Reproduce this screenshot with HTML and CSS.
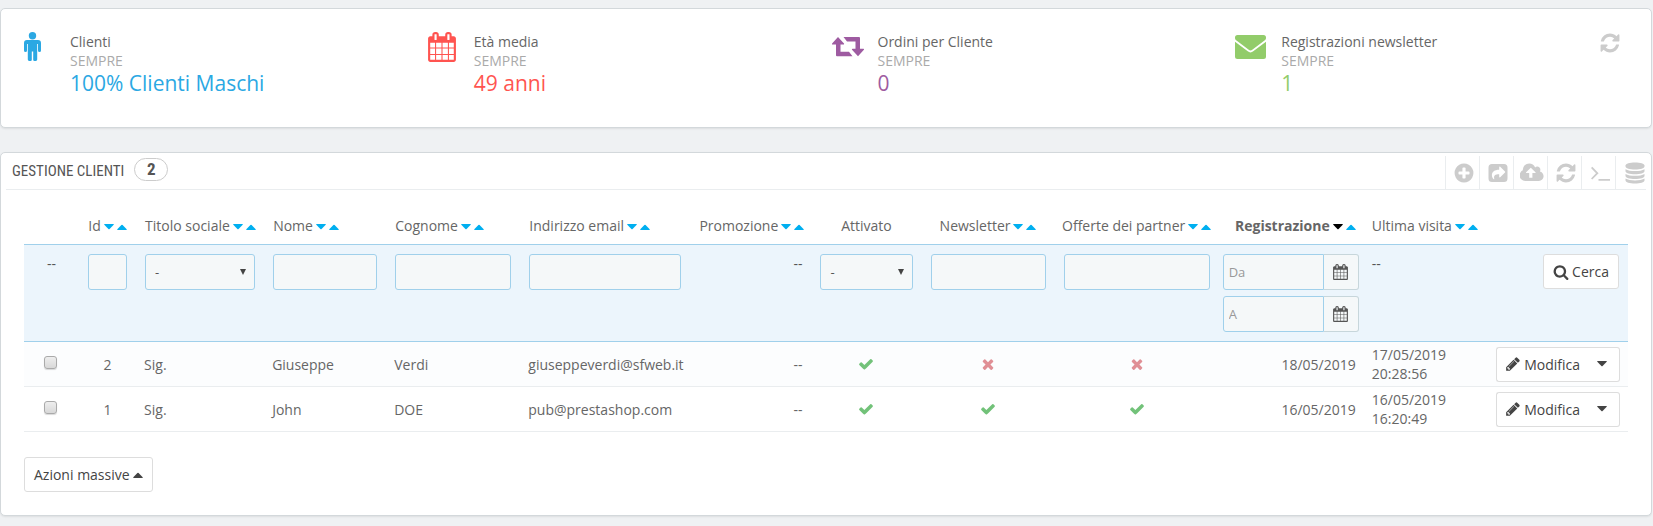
FILE: index.html
```html
<!DOCTYPE html>
<html lang="it">
<head>
    <meta charset="UTF-8">
    <meta name="viewport" content="width=device-width, initial-scale=1.0">
    <title>Gestione Clienti</title>
    <link rel="stylesheet" href="styles.css">
</head>
<body>
    <!-- Icon sprite -->
    <svg class="sprite" aria-hidden="true">
        <symbol id="i-male" viewBox="0 0 17 29">
            <circle cx="8.500" cy="3.700" r="3.700"/>
            <path d="M3 8h11a3 3 0 0 1 3 3v7.400a1.500 1.500 0 0 1-3 0V12h-.8v15.600a1.400 1.400 0 0 1-1.400 1.400H10.400a1.200 1.200 0 0 1-1.200-1.200V19.500H7.800v8.300A1.200 1.200 0 0 1 6.600 29H5.200a1.400 1.400 0 0 1-1.400-1.400V12H3v6.400a1.500 1.500 0 0 1-3 0V11a3 3 0 0 1 3-3z"/>
        </symbol>
        <symbol id="i-calendar" viewBox="64 0 1664 1792">
            <path d="M192 1664h288v-288h-288v288zm352 0h320v-288h-320v288zm-352-352h288v-320h-288v320zm352 0h320v-320h-320v320zm-352-384h288v-288h-288v288zm736 736h320v-288h-320v288zm-384-736h320v-288h-320v288zm768 736h288v-288h-288v288zm-384-352h320v-320h-320v320zm-352-864v-288q0-13-9.500-22.500t-22.500-9.500h-64q-13 0-22.500 9.500t-9.500 22.500v288q0 13 9.500 22.500t22.500 9.500h64q13 0 22.500-9.500t9.500-22.500zm736 864h288v-320h-288v320zm-384-384h320v-288h-320v288zm384 0h288v-288h-288v288zm32-480v-288q0-13-9.500-22.500t-22.500-9.500h-64q-13 0-22.500 9.500t-9.500 22.500v288q0 13 9.500 22.500t22.500 9.500h64q13 0 22.500-9.500t9.500-22.500zm384-64v1280q0 52-38 90t-90 38h-1408q-52 0-90-38t-38-90v-1280q0-52 38-90t90-38h128v-96q0-66 47-113t113-47h64q66 0 113 47t47 113v96h384v-96q0-66 47-113t113-47h64q66 0 113 47t47 113v96h128q52 0 90 38t38 90z"/>
        </symbol>
        <symbol id="i-retweet" viewBox="0 0 32 20">
            <path d="M6 0l6 6.600q.4 1-.6 1H8.500v7.200H17l3.500 4.500H5q-1 0-1-1V7.600H.6q-1 0-.5-1z"/>
            <path d="M26 19.300l-6-6.600q-.4-1 .6-1h2.900V4.500H15L11.500 0H27q1 0 1 1v10.700h3.400q1 0 .5 1z"/>
        </symbol>
        <symbol id="i-envelope" viewBox="0 0 31 24">
            <path d="M2.500 0h26A2.500 2.500 0 0 1 31 2.500v.6c0 1-.6 1.900-1.500 2.500L17.600 14.500c-1.600 1.200-2.600 1.200-4.200 0L1.500 5.600C.6 5 0 4.100 0 3.100v-.6A2.500 2.500 0 0 1 2.500 0z"/>
            <path d="M0 6.800l12.400 9.300c2.400 1.700 3.800 1.700 6.200 0L31 6.800v14.700a2.500 2.500 0 0 1-2.500 2.500h-26A2.500 2.500 0 0 1 0 21.500z"/>
        </symbol>
        <symbol id="i-refresh" viewBox="0 0 1792 1792">
            <path d="M1639 1056q0 5-1 7-64 268-268 434.500t-478 166.500q-146 0-282.500-55t-243.500-157l-129 129q-19 19-45 19t-45-19-19-45v-448q0-26 19-45t45-19h448q26 0 45 19t19 45-19 45l-137 137q71 66 161 102t187 36q134 0 250-65t186-179q11-17 53-117 8-23 30-23h192q13 0 22.500 9.500t9.500 22.500zm25-800v448q0 26-19 45t-45 19h-448q-26 0-45-19t-19-45 19-45l138-138q-148-137-349-137-134 0-250 65t-186 179q-11 17-53 117-8 23-30 23h-199q-13 0-22.500-9.500t-9.500-22.500v-7q65-268 270-434.500t480-166.500q146 0 284 55.500t245 156.500l130-129q19-19 45-19t45 19 19 45z"/>
        </symbol>
        <symbol id="i-plus" viewBox="0 0 1792 1792">
            <path d="M1344 960v-128q0-26-19-45t-45-19h-256v-256q0-26-19-45t-45-19h-128q-26 0-45 19t-19 45v256h-256q-26 0-45 19t-19 45v128q0 26 19 45t45 19h256v256q0 26 19 45t45 19h128q26 0 45-19t19-45v-256h256q26 0 45-19t19-45zm320-64q0 209-103 385.500t-279.500 279.500-385.500 103-385.500-103-279.500-279.500-103-385.500 103-385.500 279.500-279.500 385.500-103 385.500 103 279.500 279.500 103 385.500z"/>
        </symbol>
        <symbol id="i-share" viewBox="0 0 22 22">
            <path fill-rule="evenodd" d="M5 2h12a3.500 3.500 0 0 1 3.500 3.500v11a3.500 3.500 0 0 1-3.500 3.500H5a3.500 3.500 0 0 1-3.500-3.500v-11A3.500 3.500 0 0 1 5 2zm7.200 3.200v2.600C7.500 7.800 4.900 9.900 4.900 13.200c0 1.700.7 3 1.900 4 .3.200.6 0 .5-.3-.9-3.600.8-4.700 4.900-4.700v2.600c0 .6.600.8 1 .4l4.800-4.700c.3-.3.3-.7 0-1l-4.800-4.700c-.4-.4-1-.2-1 .4z"/>
        </symbol>
        <symbol id="i-upload" viewBox="-32 0 1920 1792">
            <path d="M1216 864q0-14-9-23l-352-352q-9-9-23-9t-23 9l-351 351q-10 12-10 24 0 14 9 23t23 9h224v352q0 13 9.500 22.500t22.500 9.500h192q13 0 22.500-9.500t9.500-22.500v-352h224q13 0 22.500-9.500t9.500-22.500zm640 288q0 159-112.500 271.500t-271.500 112.500h-1088q-185 0-316.500-131.500t-131.500-316.500q0-130 70-240t188-165q-2-30-2-43 0-212 150-362t362-150q156 0 285.500 87t188.500 231q71-62 166-62 106 0 181 75t75 181q0 76-41 138 130 31 213.500 135.500t83.500 238.500z"/>
        </symbol>
        <symbol id="i-terminal" viewBox="0 0 22 22">
            <path d="M2 6l1.300-1.200 6.300 6.400-6.300 6.400L2 16.400l5-5.200zM9.500 17H21v1.800H9.500z"/>
        </symbol>
        <symbol id="i-database" viewBox="0 0 20 22">
            <path d="M10 .5c5.300 0 9.500 1.300 9.500 3v1c0 1.700-4.200 3-9.500 3S.5 6.200.5 4.500v-1c0-1.700 4.200-3 9.500-3z"/>
            <path id="disc" d="M.5 7.200C2.500 8.500 6 9.100 10 9.100s7.500-.6 9.500-1.900v2c0 1.700-4.200 3-9.500 3S.5 10.900.5 9.200z"/>
            <use href="#disc" y="4.700"/>
            <use href="#disc" y="9.400"/>
        </symbol>
        <symbol id="i-check" viewBox="0 0 1792 1792">
            <path d="M1671 566q0 40-28 68l-724 724-136 136q-28 28-68 28t-68-28l-136-136-362-362q-28-28-28-68t28-68l136-136q28-28 68-28t68 28l294 295 656-657q28-28 68-28t68 28l136 136q28 28 28 68z"/>
        </symbol>
        <symbol id="i-times" viewBox="0 0 1792 1792">
            <path d="M1490 1322q0 40-28 68l-136 136q-28 28-68 28t-68-28l-294-294-294 294q-28 28-68 28t-68-28l-136-136q-28-28-28-68t28-68l294-294-294-294q-28-28-28-68t28-68l136-136q28-28 68-28t68 28l294 294 294-294q28-28 68-28t68 28l136 136q28 28 28 68t-28 68l-294 294 294 294q28 28 28 68z"/>
        </symbol>
        <symbol id="i-search" viewBox="0 0 1792 1792">
            <path d="M1216 832q0-185-131.500-316.500t-316.500-131.500-316.500 131.500-131.500 316.500 131.500 316.500 316.500 131.500 316.500-131.500 131.500-316.500zm512 832q0 52-38 90t-90 38q-54 0-90-38l-343-342q-179 124-399 124-143 0-273.500-55.500t-225-150-150-225-55.500-273.500 55.500-273.500 150-225 225-150 273.500-55.500 273.500 55.500 225 150 150 225 55.500 273.500q0 220-124 399l343 343q37 37 37 90z"/>
        </symbol>
        <symbol id="i-pencil" viewBox="0 0 1792 1792">
            <path d="M491 1536l91-91-235-235-91 91v107h128v128h107zm523-928q0-22-22-22-10 0-17 7l-542 542q-7 7-7 17 0 22 22 22 10 0 17-7l542-542q7-7 7-17zm-54-192l416 416-832 832h-416v-416zm683 96q0 53-37 90l-166 166-416-416 166-165q36-38 90-38 53 0 91 38l235 234q37 39 37 91z"/>
        </symbol>
        <symbol id="i-down" viewBox="0 0 10 6"><path d="M.7 0h8.600q.9.200.4.800L5.600 5q-.6.500-1.200 0L.3.800Q-.2.200.7 0z"/></symbol>
        <symbol id="i-up" viewBox="0 0 10 6"><path d="M.7 6h8.600q.9-.2.400-.8L5.600 1q-.6-.5-1.200 0L.3 5.200q-.5.600.4.800z"/></symbol>
        <symbol id="i-arrow" viewBox="0 0 6 6"><path d="M0 0h6L3 6z"/></symbol>
    </svg>

    <section class="panel kpi-row">
        <div class="kpi blue">
            <div class="kpi-icon"><svg class="icon-male"><use href="#i-male"/></svg></div>
            <div class="kpi-body">
                <div>Clienti</div>
                <div class="kpi-sub">SEMPRE</div>
                <div class="kpi-value">100% Clienti Maschi</div>
            </div>
        </div>
        <div class="kpi red">
            <div class="kpi-icon"><svg class="icon-calendar"><use href="#i-calendar"/></svg></div>
            <div class="kpi-body">
                <div>Età media</div>
                <div class="kpi-sub">SEMPRE</div>
                <div class="kpi-value">49 anni</div>
            </div>
        </div>
        <div class="kpi purple">
            <div class="kpi-icon"><svg class="icon-retweet"><use href="#i-retweet"/></svg></div>
            <div class="kpi-body">
                <div>Ordini per Cliente</div>
                <div class="kpi-sub">SEMPRE</div>
                <div class="kpi-value">0</div>
            </div>
        </div>
        <div class="kpi green">
            <div class="kpi-icon"><svg class="icon-envelope"><use href="#i-envelope"/></svg></div>
            <div class="kpi-body">
                <div>Registrazioni newsletter</div>
                <div class="kpi-sub">SEMPRE</div>
                <div class="kpi-value">1</div>
            </div>
            <button class="kpi-refresh" type="button" aria-label="Aggiorna"><svg class="icon-lg"><use href="#i-refresh"/></svg></button>
        </div>
    </section>

    <section class="panel">
        <div class="panel-heading">
            <h1 class="title">GESTIONE CLIENTI</h1>
            <span class="badge">2</span>
            <nav class="toolbar">
                <a href="#" aria-label="Aggiungi"><svg class="icon-lg"><use href="#i-plus"/></svg></a>
                <a href="#" aria-label="Esporta"><svg class="icon-lg"><use href="#i-share"/></svg></a>
                <a href="#" aria-label="Importa"><svg class="icon-cloud"><use href="#i-upload"/></svg></a>
                <a href="#" aria-label="Aggiorna lista"><svg class="icon-lg"><use href="#i-refresh"/></svg></a>
                <a href="#" aria-label="Mostra query SQL"><svg class="icon-lg"><use href="#i-terminal"/></svg></a>
                <a href="#" aria-label="Esporta in SQL Manager"><svg class="icon-lg"><use href="#i-database"/></svg></a>
            </nav>
        </div>

        <form class="panel-body">
            <table class="customers">
                <colgroup>
                    <col class="w-check"><col class="w-id"><col class="w-title"><col class="w-name"><col class="w-surname">
                    <col class="w-email"><col class="w-promo"><col class="w-active"><col class="w-news"><col class="w-partner">
                    <col class="w-date"><col class="w-visit"><col class="w-actions">
                </colgroup>
                <thead>
                    <tr class="headings">
                        <th></th>
                        <th class="center">Id<a class="sort" href="#" aria-label="Id decrescente"><svg><use href="#i-down"/></svg></a><a class="sort" href="#" aria-label="Id crescente"><svg><use href="#i-up"/></svg></a></th>
                        <th>Titolo sociale<a class="sort" href="#" aria-label="Titolo decrescente"><svg><use href="#i-down"/></svg></a><a class="sort" href="#" aria-label="Titolo crescente"><svg><use href="#i-up"/></svg></a></th>
                        <th>Nome<a class="sort" href="#" aria-label="Nome decrescente"><svg><use href="#i-down"/></svg></a><a class="sort" href="#" aria-label="Nome crescente"><svg><use href="#i-up"/></svg></a></th>
                        <th>Cognome<a class="sort" href="#" aria-label="Cognome decrescente"><svg><use href="#i-down"/></svg></a><a class="sort" href="#" aria-label="Cognome crescente"><svg><use href="#i-up"/></svg></a></th>
                        <th>Indirizzo email<a class="sort" href="#" aria-label="Email decrescente"><svg><use href="#i-down"/></svg></a><a class="sort" href="#" aria-label="Email crescente"><svg><use href="#i-up"/></svg></a></th>
                        <th class="right">Promozione<a class="sort" href="#" aria-label="Promozione decrescente"><svg><use href="#i-down"/></svg></a><a class="sort" href="#" aria-label="Promozione crescente"><svg><use href="#i-up"/></svg></a></th>
                        <th class="center">Attivato</th>
                        <th class="center">Newsletter<a class="sort" href="#" aria-label="Newsletter decrescente"><svg><use href="#i-down"/></svg></a><a class="sort" href="#" aria-label="Newsletter crescente"><svg><use href="#i-up"/></svg></a></th>
                        <th class="center">Offerte dei partner<a class="sort" href="#" aria-label="Offerte decrescente"><svg><use href="#i-down"/></svg></a><a class="sort" href="#" aria-label="Offerte crescente"><svg><use href="#i-up"/></svg></a></th>
                        <th class="right date-head"><strong>Registrazione</strong><a class="sort active" href="#" aria-label="Registrazione decrescente"><svg><use href="#i-down"/></svg></a><a class="sort" href="#" aria-label="Registrazione crescente"><svg><use href="#i-up"/></svg></a></th>
                        <th class="visit-cell">Ultima visita<a class="sort" href="#" aria-label="Visita decrescente"><svg><use href="#i-down"/></svg></a><a class="sort" href="#" aria-label="Visita crescente"><svg><use href="#i-up"/></svg></a></th>
                        <th></th>
                    </tr>
                    <tr class="filters">
                        <td class="center">--</td>
                        <td><input class="field" type="text" aria-label="Filtra Id"></td>
                        <td>
                            <div class="select">
                                <select class="field" aria-label="Filtra Titolo sociale"><option>-</option><option>Sig.</option></select>
                                <svg><use href="#i-arrow"/></svg>
                            </div>
                        </td>
                        <td><input class="field" type="text" aria-label="Filtra Nome"></td>
                        <td><input class="field" type="text" aria-label="Filtra Cognome"></td>
                        <td><input class="field" type="text" aria-label="Filtra Indirizzo email"></td>
                        <td class="right">--</td>
                        <td>
                            <div class="select">
                                <select class="field" aria-label="Filtra Attivato"><option>-</option><option>Sì</option><option>No</option></select>
                                <svg><use href="#i-arrow"/></svg>
                            </div>
                        </td>
                        <td><input class="field" type="text" aria-label="Filtra Newsletter"></td>
                        <td><input class="field" type="text" aria-label="Filtra Offerte dei partner"></td>
                        <td class="date-cell">
                            <div class="dates">
                                <div class="date-group">
                                    <input class="field" type="text" placeholder="Da" aria-label="Registrazione da">
                                    <span class="addon"><svg><use href="#i-calendar"/></svg></span>
                                </div>
                                <div class="date-group">
                                    <input class="field" type="text" placeholder="A" aria-label="Registrazione a">
                                    <span class="addon"><svg><use href="#i-calendar"/></svg></span>
                                </div>
                            </div>
                        </td>
                        <td class="visit-cell">--</td>
                        <td><button class="btn push" type="button"><svg class="icon"><use href="#i-search"/></svg>Cerca</button></td>
                    </tr>
                </thead>
                <tbody>
                    <tr class="odd">
                        <td class="check-cell"><input class="check" type="checkbox" aria-label="Seleziona cliente 2"></td>
                        <td class="center">2</td>
                        <td>Sig.</td>
                        <td>Giuseppe</td>
                        <td>Verdi</td>
                        <td>giuseppeverdi@sfweb.it</td>
                        <td class="right">--</td>
                        <td class="center"><a class="yes" href="#" aria-label="Attivato"><svg class="icon"><use href="#i-check"/></svg></a></td>
                        <td class="center"><a class="no" href="#" aria-label="Newsletter no"><svg class="icon"><use href="#i-times"/></svg></a></td>
                        <td class="center"><a class="no" href="#" aria-label="Offerte no"><svg class="icon"><use href="#i-times"/></svg></a></td>
                        <td class="right reg">18/05/2019</td>
                        <td class="visit">17/05/2019 20:28:56</td>
                        <td>
                            <div class="btn-group">
                                <button class="btn" type="button"><svg class="icon"><use href="#i-pencil"/></svg>Modifica</button>
                                <button class="btn toggle" type="button" aria-label="Altre azioni"><svg class="caret"><use href="#i-down"/></svg></button>
                            </div>
                        </td>
                    </tr>
                    <tr>
                        <td class="check-cell"><input class="check" type="checkbox" aria-label="Seleziona cliente 1"></td>
                        <td class="center">1</td>
                        <td>Sig.</td>
                        <td>John</td>
                        <td>DOE</td>
                        <td>pub@prestashop.com</td>
                        <td class="right">--</td>
                        <td class="center"><a class="yes" href="#" aria-label="Attivato"><svg class="icon"><use href="#i-check"/></svg></a></td>
                        <td class="center"><a class="yes" href="#" aria-label="Newsletter sì"><svg class="icon"><use href="#i-check"/></svg></a></td>
                        <td class="center"><a class="yes" href="#" aria-label="Offerte sì"><svg class="icon"><use href="#i-check"/></svg></a></td>
                        <td class="right reg">16/05/2019</td>
                        <td class="visit">16/05/2019 16:20:49</td>
                        <td>
                            <div class="btn-group">
                                <button class="btn" type="button"><svg class="icon"><use href="#i-pencil"/></svg>Modifica</button>
                                <button class="btn toggle" type="button" aria-label="Altre azioni"><svg class="caret"><use href="#i-down"/></svg></button>
                            </div>
                        </td>
                    </tr>
                </tbody>
            </table>
            <button class="btn" type="button">Azioni massive<svg class="caret"><use href="#i-up"/></svg></button>
        </form>
    </section>
</body>
</html>
```
FILE: styles.css
```css
* {
    box-sizing: border-box;
}
body {
    margin: 8px 1px 10px 0;
    background-color: #eff1f3;
    color: #666;
    font-family: "Open Sans", sans-serif;
    font-size: 14px;
    line-height: 19px;
}
svg {
    fill: currentColor;
    flex: none;
}
.sprite {
    position: absolute;
    width: 0;
    height: 0;
}
.panel {
    background-color: #fff;
    border: 1px solid #d3d8db;
    border-radius: 5px;
    box-shadow: 0 1px 2px rgba(0, 0, 0, 0.08);
    margin-bottom: 24px;
}

/* KPI boxes */
.kpi-row {
    display: grid;
    grid-template-columns: repeat(4, 1fr);
    padding: 23px 12px 31px 23px;
}
.kpi {
    display: flex;
    align-items: flex-start;
}
.kpi-icon {
    display: flex;
    align-items: center;
    width: 46px;
    height: 29px;
}
.kpi-value {
    font-size: 21px;
    line-height: 26px;
}
.kpi-sub {
    color: #aaa;
}
.icon-male {
    width: 17px;
    height: 29px;
}
.icon-calendar {
    width: 28px;
    height: 30px;
}
.icon-retweet {
    width: 32px;
    height: 20px;
}
.icon-envelope {
    width: 31px;
    height: 24px;
}
.blue .kpi-icon, .blue .kpi-value {
    color: #2ba8e3;
}
.red .kpi-icon, .red .kpi-value {
    color: #ff5450;
}
.purple .kpi-icon, .purple .kpi-value {
    color: #9e5ba1;
}
.green .kpi-icon, .green .kpi-value {
    color: #92cc6a;
}
.kpi-refresh {
    margin: 0 18px 0 auto;
    padding: 0;
    border: none;
    background: none;
    color: #ccc;
    cursor: pointer;
}
.icon-lg {
    display: block;
    width: 22px;
    height: 22px;
}
.icon-cloud {
    width: 24px;
    height: 24px;
}

/* Panel heading */
.panel-heading {
    display: flex;
    align-items: flex-start;
    margin: 0 5px;
    padding: 3px 0 0 6px;
    border-bottom: 1px solid #eaedef;
}
.title {
    margin: 4px 10px 0 0;
    color: #555;
    font-family: "Ubuntu Condensed", "Liberation Sans Narrow", "Roboto Condensed", sans-serif;
    font-size: 15px;
    font-weight: normal;
    line-height: 22px;
}
.badge {
    width: 34px;
    margin-top: 2px;
    border: 1px solid #ccc;
    border-radius: 12px;
    color: #555;
    font-family: "Ubuntu Condensed", "Liberation Sans Narrow", "Roboto Condensed", sans-serif;
    font-size: 17px;
    font-weight: bold;
    line-height: 21px;
    text-align: center;
}
.toolbar {
    display: flex;
    margin-left: auto;
}
.toolbar a {
    display: flex;
    align-items: center;
    justify-content: center;
    width: 34px;
    height: 33px;
    padding-left: 2px;
    border-left: 1px solid #eaedef;
    color: #ccc;
}
.toolbar a:last-child {
    justify-content: flex-end;
    width: 31px;
}

/* Customers table */
.panel-body {
    padding: 19px 23px 23px;
}
.customers {
    width: 100%;
    margin-bottom: 25px;
    border-collapse: separate;
    border-spacing: 0;
    table-layout: fixed;
}
.w-check { width: 55px; }
.w-id { width: 57px; }
.w-title { width: 128px; }
.w-name { width: 122px; }
.w-surname { width: 134px; }
.w-email { width: 170px; }
.w-promo { width: 121px; }
.w-active { width: 110px; }
.w-news { width: 133px; }
.w-partner { width: 164px; }
.w-date { width: 148px; }
.w-visit { width: 120px; }
.w-actions { width: 141px; }
.headings th {
    padding: 7px 9px 9px;
    border-bottom: 1px solid #a0d0eb;
    font-weight: normal;
    text-align: left;
    white-space: nowrap;
}
.customers .center {
    text-align: center;
}
.customers .right {
    text-align: right;
}
.headings .center {
    padding-left: 0;
    padding-right: 0;
}
.sort {
    margin-left: 3px;
    color: #00aff0;
}
.sort svg {
    width: 10px;
    height: 6px;
    vertical-align: 1px;
}
.sort.active {
    color: #000;
}
.filters td {
    padding: 9px;
    border-bottom: 1px solid #a0d0eb;
    background-color: #ecf5fc;
    color: #555;
    vertical-align: top;
}
.customers .date-cell {
    padding-left: 4px;
    padding-right: 8px;
}
.customers .date-head {
    padding-right: 11px;
}
.customers .visit-cell {
    padding-left: 5px;
}
.field {
    display: block;
    width: 100%;
    height: 36px;
    margin: 0;
    padding: 0 9px;
    border: 1px solid #a0d0eb;
    border-radius: 3px;
    background-color: #f5f8f9;
    color: #555;
    font-family: inherit;
    font-size: 13px;
    appearance: none;
}
.select {
    position: relative;
}
.select svg {
    position: absolute;
    top: 15px;
    right: 9px;
    width: 6px;
    height: 6px;
    color: #444;
    pointer-events: none;
}
.dates {
    display: grid;
    gap: 6px;
}
.date-group {
    display: flex;
}
.date-group .field {
    flex: 1;
    min-width: 0;
    padding: 0 5px;
    border-radius: 3px 0 0 3px;
}
.field::placeholder {
    color: #999;
    opacity: 1;
}
.addon {
    display: flex;
    align-items: center;
    justify-content: center;
    width: 35px;
    border: 1px solid #c7d6db;
    border-left: none;
    border-radius: 0 3px 3px 0;
    background-color: #f5f8f9;
}
.addon svg {
    width: 15px;
    height: 16px;
}
.customers tbody td {
    height: 45px;
    padding: 3px 8px;
    border-bottom: 1px solid #eaedef;
}
.customers .odd td {
    background-color: #fcfdfe;
}
.customers tbody .right {
    padding-right: 9px;
}
.customers tbody .reg {
    padding-right: 11px;
}
.customers tbody .visit {
    padding-left: 5px;
}
.customers tbody .check-cell {
    padding-bottom: 9px;
    padding-right: 10px;
    text-align: center;
}
.check {
    width: 13px;
    height: 13px;
    margin: 0;
    border: 1px solid #aaa;
    border-radius: 3px;
    background: linear-gradient(#eee, #d8d8d8);
    box-shadow: 0 1px 1px rgba(0, 0, 0, 0.15);
    vertical-align: middle;
    appearance: none;
}
.icon {
    width: 16px;
    height: 16px;
    vertical-align: -2px;
}
.yes {
    color: #72c279;
}
.no {
    color: #e08f95;
}

/* Buttons */
.btn {
    display: flex;
    align-items: center;
    gap: 3px;
    height: 35px;
    padding: 0 9px;
    border: 1px solid #ddd;
    border-radius: 3px;
    background-color: #fff;
    color: #444;
    font-family: inherit;
    font-size: 14px;
    line-height: 19px;
    cursor: pointer;
}
.btn:hover {
    background-color: #f5f8f9;
}
.push {
    margin-left: auto;
}
.caret {
    width: 10px;
    height: 6px;
}
.btn-group {
    display: flex;
    justify-content: flex-end;
}
.btn-group .btn {
    padding-left: 8px;
    border-right: none;
    border-radius: 3px 0 0 3px;
}
.btn-group .toggle {
    padding: 0 12px 0 8px;
    border-right: 1px solid #ddd;
    border-left: none;
    border-radius: 0 3px 3px 0;
}
```
